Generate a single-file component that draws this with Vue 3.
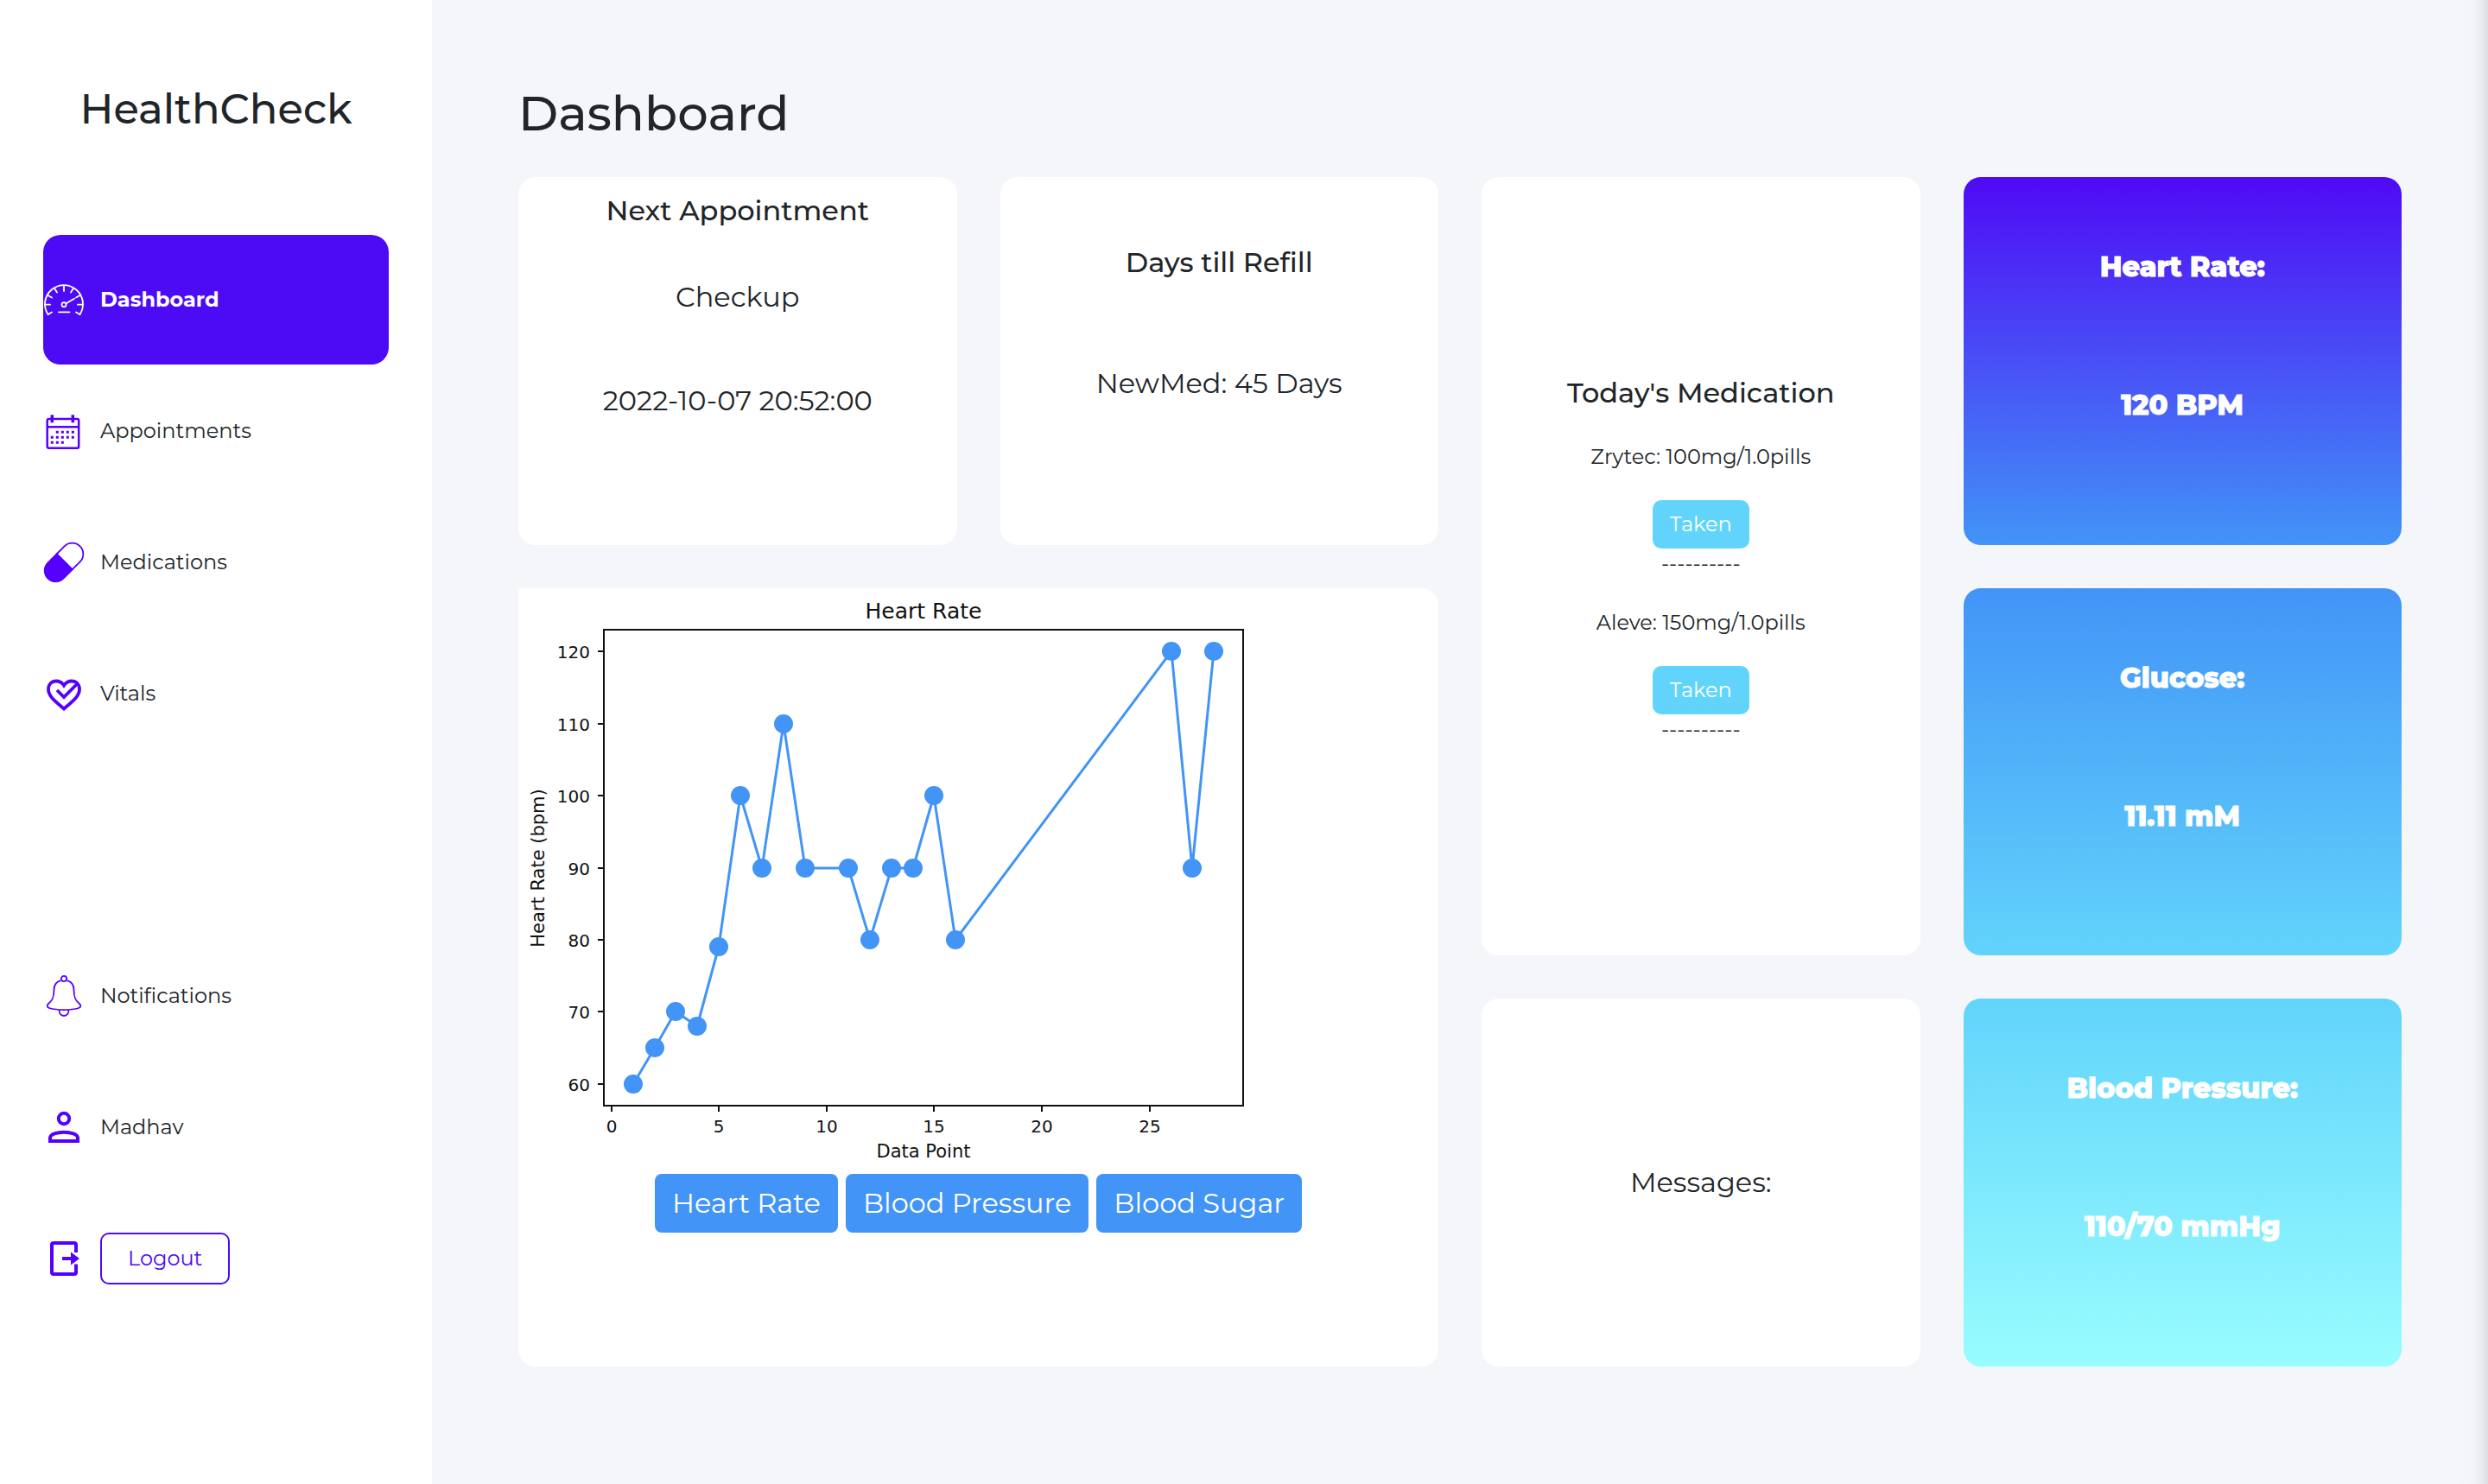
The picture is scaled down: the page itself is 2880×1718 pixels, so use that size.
<script setup>
const medications = [
  { id: 1, text: 'Zrytec: 100mg/1.0pills' },
  { id: 2, text: 'Aleve: 150mg/1.0pills' },
]

const vitals = [
  { id: 'heart', label: 'Heart Rate:', value: '120 BPM' },
  { id: 'glucose', label: 'Glucose:', value: '11.11 mM' },
  { id: 'pressure', label: 'Blood Pressure:', value: '110/70 mmHg' },
]

const readings = [
  [1, 60], [2, 65], [3, 70], [4, 68], [5, 79], [6, 100], [7, 90], [8, 110], [9, 90],
  [11, 90], [12, 80], [13, 90], [14, 90], [15, 100], [16, 80], [26, 120], [27, 90], [28, 120],
]

// Plot frame and the data range that it spans
const frame = { left: 99, right: 839, top: 48, bottom: 599 }
const range = { x0: -0.35, x1: 29.35, y0: 57, y1: 123 }
const px = (x) => Math.round(frame.left + ((x - range.x0) / (range.x1 - range.x0)) * (frame.right - frame.left))
const py = (y) => Math.round(frame.bottom - ((y - range.y0) / (range.y1 - range.y0)) * (frame.bottom - frame.top))

const xTicks = [0, 5, 10, 15, 20, 25]
const yTicks = [60, 70, 80, 90, 100, 110, 120]
const points = readings.map(([x, y]) => ({ x: px(x), y: py(y) }))
const line = points.map((p) => `${p.x},${p.y}`).join(' ')
</script>

<template>
  <div class="layout">
    <aside class="sidebar">
      <h2 class="brand">HealthCheck</h2>
      <nav class="nav">
        <a href="#" class="item active">
          <svg class="icon" viewBox="0 0 48 48" fill="none" stroke="currentColor" stroke-width="1.800" stroke-linecap="round">
            <path d="M10 38.500L5.500 41A22 22 0 1 1 42.500 41L38 38.500" />
            <path d="M2.500 29.700H8M40 29.700h5.500M24 8v6M5.500 19l4.500 2.500M42.500 19L38 21.500M13.500 11.500l2.500 4M34.500 11.500l-2.500 4M26.500 28.200L36 22.800M18 38.300h12.500" />
            <circle cx="24" cy="29.700" r="2.500" />
          </svg>
          <span>Dashboard</span>
        </a>
        <a href="#" class="item">
          <svg class="icon" viewBox="0 0 48 48" fill="none" stroke="currentColor" stroke-width="2.500">
            <rect x="4.700" y="10" width="36.500" height="33.800" rx="2" />
            <path d="M4.700 19.300h36.500" />
            <path stroke-width="3.500" d="M10.300 5.300v9M34.300 5.300v9" />
            <path stroke-width="3" stroke-dasharray="3 3" d="M14.800 25.300h21M8.800 31.300h27M8.800 37.300h15" />
          </svg>
          <span>Appointments</span>
        </a>
        <a href="#" class="item">
          <svg class="icon" viewBox="0 0 48 48" fill="none" stroke="currentColor" stroke-width="1.800">
            <path d="M15.500 14.500L24.600 5.400A12.700 12.700 0 0 1 42.600 23.400L33.500 32.500z" />
            <path fill="currentColor" d="M15.800 14.200L5.400 24.600A12.700 12.700 0 0 0 23.400 42.600L33.800 32.200z" />
          </svg>
          <span>Medications</span>
        </a>
        <a href="#" class="item">
          <svg class="icon" viewBox="0 0 48 48" fill="none" stroke="currentColor" stroke-width="3.800">
            <path d="M24 41.500C15 33.500 6 27.500 6 19C6 13 10 9.500 15 9.500C19 9.500 22 11.500 24 14.500C26 11.500 29 9.500 33 9.500C38 9.500 42 13 42 19C42 27.500 33 33.500 24 41.500z" />
            <path d="M16 20l8 8L39 13" />
          </svg>
          <span>Vitals</span>
        </a>
      </nav>
      <div class="nav account">
        <a href="#" class="item">
          <svg class="icon" viewBox="0 0 48 48" fill="none" stroke="currentColor" stroke-width="1.800">
            <circle cx="24" cy="4" r="3.100" />
            <path d="M20.500 6.200C15 7.500 12.500 12 12.500 17C12.500 26 10.500 29.500 6.500 32.500C4 34.500 4 37 7 38C16 40.800 32 40.800 41 38C44 37 44 34.500 41.500 32.500C37.500 29.500 35.500 26 35.500 17C35.500 12 33 7.500 27.500 6.200" />
            <path d="M18.800 40C18 44 20.500 47 24 47S30 44 29.200 40" />
          </svg>
          <span>Notifications</span>
        </a>
        <a href="#" class="item">
          <svg class="icon" viewBox="0 0 48 48" fill="none" stroke="currentColor" stroke-width="4">
            <circle cx="24" cy="14" r="6.200" />
            <path d="M8 40V36.500C8 32 16 29.700 24 29.700S40 32 40 36.500V40z" />
          </svg>
          <span>Madhav</span>
        </a>
        <div class="item">
          <svg class="icon" viewBox="0 0 48 48" fill="none" stroke="currentColor" stroke-width="4">
            <path d="M38 17V8a2 2 0 0 0-2-2H12a2 2 0 0 0-2 2v32a2 2 0 0 0 2 2h24a2 2 0 0 0 2-2V30.500" />
            <path d="M22 24h11" />
            <path fill="currentColor" stroke="none" d="M32 16.500L42 24L32 31.500z" />
          </svg>
          <button type="button" class="logout">Logout</button>
        </div>
      </div>
    </aside>

    <main class="main">
      <h1 class="heading">Dashboard</h1>
      <div class="grid">
        <section class="card appointment">
          <h3>Next Appointment</h3>
          <p>Checkup</p>
          <p class="date">2022-10-07 20:52:00</p>
        </section>

        <section class="card refill">
          <h3>Days till Refill</h3>
          <p>NewMed: 45 Days</p>
        </section>

        <section class="card today">
          <h3>Today's Medication</h3>
          <div v-for="med in medications" :key="med.id" class="dose">
            <p>{{ med.text }}</p>
            <button type="button" class="taken">Taken</button>
            <span class="rule">----------</span>
          </div>
        </section>

        <section class="card chart">
          <svg class="plot" viewBox="0 0 900 678" role="img" aria-label="Heart Rate">
            <text class="title" x="469" y="35" text-anchor="middle">Heart Rate</text>
            <g v-for="t in yTicks" :key="'y' + t">
              <line class="axis" :x1="frame.left - 7" :x2="frame.left" :y1="py(t)" :y2="py(t)" />
              <text :x="83" :y="py(t) + 8" text-anchor="end">{{ t }}</text>
            </g>
            <g v-for="t in xTicks" :key="'x' + t">
              <line class="axis" :x1="px(t)" :x2="px(t)" :y1="frame.bottom" :y2="frame.bottom + 7" />
              <text :x="px(t)" y="630" text-anchor="middle">{{ t }}</text>
            </g>
            <polyline class="line" :points="line" />
            <circle v-for="(p, i) in points" :key="i" class="dot" :cx="p.x" :cy="p.y" r="11" />
            <rect
              class="axis"
              :x="frame.left"
              :y="frame.top"
              :width="frame.right - frame.left"
              :height="frame.bottom - frame.top"
            />
            <text class="label" x="469" y="659" text-anchor="middle">Data Point</text>
            <text class="label" transform="translate(30 324) rotate(-90)" text-anchor="middle">Heart Rate (bpm)</text>
          </svg>
          <div class="tabs">
            <button type="button">Heart Rate</button>
            <button type="button">Blood Pressure</button>
            <button type="button">Blood Sugar</button>
          </div>
        </section>

        <section class="card messages">
          <p>Messages:</p>
        </section>

        <section v-for="v in vitals" :key="v.id" class="card vital" :class="v.id">
          <p>{{ v.label }}</p>
          <p>{{ v.value }}</p>
        </section>
      </div>
    </main>
  </div>
</template>

<style>
body {
  margin: 0;
  background: #f4f6fa;
}
</style>

<style scoped>
.layout {
  display: flex;
  min-height: 100vh;
  font-family: Montserrat, Inter, sans-serif;
  font-size: 24px;
  line-height: 36px;
  color: #212529;
}

h1,
h2,
h3,
p {
  margin: 0;
  font-weight: 400;
}

button {
  box-sizing: border-box;
  font: inherit;
  cursor: pointer;
}

.sidebar {
  box-sizing: border-box;
  flex: none;
  width: 500px;
  padding: 96px 50px 0;
  background: #fff;
}

.brand {
  font-size: 48px;
  line-height: 60px;
  font-weight: 500;
  text-align: center;
}

.nav {
  display: flex;
  flex-direction: column;
  gap: 2px;
  margin-top: 116px;
}

.account {
  margin-top: 200px;
}

.item {
  display: flex;
  align-items: center;
  gap: 18px;
  height: 150px;
  border-radius: 20px;
  color: #212529;
  text-decoration: none;
}

.icon {
  flex: none;
  width: 48px;
  height: 48px;
  color: #5500ff;
}

.active {
  background: #4d0af5;
  color: #fff;
  font-weight: 700;
}

.active .icon {
  color: #fff;
}

.logout {
  height: 60px;
  padding: 0 30px;
  border: 2px solid #4d0af5;
  border-radius: 10px;
  background: #fff;
  color: #4d0af5;
}

.main {
  box-sizing: border-box;
  flex: 1;
  min-width: 0;
  display: flex;
  flex-direction: column;
  gap: 38px;
  padding: 95px 100px 136px;
  background: linear-gradient(to left, #dcdde1 0, #ebecf0 8px, #f2f4f8 18px, #f4f6fa 36px);
}

.heading {
  font-size: 56px;
  line-height: 72px;
  font-weight: 500;
}

.grid {
  flex: 1;
  display: grid;
  grid-template-columns: repeat(4, minmax(0, 1fr));
  grid-template-rows: repeat(3, 1fr);
  grid-template-areas:
    'appointment refill today heart'
    'chart chart today glucose'
    'chart chart messages pressure';
  gap: 50px;
}

.card {
  display: flex;
  flex-direction: column;
  align-items: center;
  box-sizing: border-box;
  border-radius: 20px;
  background: #fff;
  font-size: 32px;
  line-height: 40px;
  text-align: center;
}

.card h3 {
  font-size: 32px;
  font-weight: 500;
}

.appointment {
  grid-area: appointment;
  gap: 60px;
  padding-top: 19px;
}

.date {
  margin-top: 20px;
}

.refill {
  grid-area: refill;
  gap: 100px;
  padding-top: 79px;
}

.today {
  grid-area: today;
  padding-top: 230px;
}

.dose {
  display: flex;
  flex-direction: column;
  align-items: center;
  padding-top: 30px;
  font-size: 24px;
  line-height: 36px;
}

.today h3 {
  margin-bottom: 6px;
}

.taken {
  height: 56px;
  margin: 32px 0 2px;
  padding: 0 20px;
  border: 0;
  border-radius: 10px;
  background: #62d4fb;
  color: #fff;
}

.rule {
  padding-bottom: 4px;
  line-height: 32px;
}

.chart {
  grid-area: chart;
  border-top-left-radius: 0;
}

.plot {
  align-self: flex-start;
  width: 900px;
  max-width: 100%;
  font-family: 'DejaVu Sans', sans-serif;
  font-size: 20px;
  fill: #111;
}

.title {
  font-size: 25px;
}

.label {
  font-size: 21px;
}

.axis {
  fill: none;
  stroke: #111;
  stroke-width: 2;
}

.line {
  fill: none;
  stroke: #4294f7;
  stroke-width: 3;
  stroke-linejoin: round;
}

.dot {
  fill: #4294f7;
}

.tabs {
  display: flex;
  gap: 9px;
}

.tabs button {
  height: 68px;
  padding: 0 20px;
  border: 0;
  border-radius: 8px;
  background: #4294f7;
  color: #fff;
}

.messages {
  grid-area: messages;
  justify-content: center;
}

.vital {
  gap: 120px;
  padding-top: 84px;
  color: #fff;
}

.vital p {
  font-weight: 800;
  -webkit-text-stroke: 1px currentColor;
}

.heart {
  grid-area: heart;
  background: linear-gradient(#4f0af5, #4294f7);
}

.glucose {
  grid-area: glucose;
  background: linear-gradient(#4294f7, #62d4fb);
}

.pressure {
  grid-area: pressure;
  background: linear-gradient(#62d4fb, #98fdff);
}
</style>
